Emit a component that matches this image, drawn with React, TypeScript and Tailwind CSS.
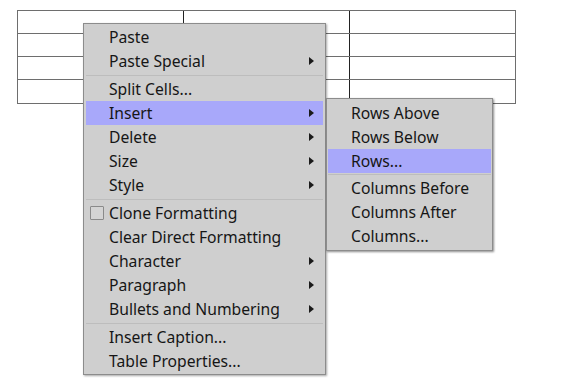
import React from "react";

type Item =
  | { kind: "sep" }
  | { kind: "item"; label: string; sub?: boolean; check?: boolean; active?: boolean };

const mainItems: Item[] = [
  { kind: "item", label: "Paste" },
  { kind: "item", label: "Paste Special", sub: true },
  { kind: "sep" },
  { kind: "item", label: "Split Cells..." },
  { kind: "item", label: "Insert", sub: true, active: true },
  { kind: "item", label: "Delete", sub: true },
  { kind: "item", label: "Size", sub: true },
  { kind: "item", label: "Style", sub: true },
  { kind: "sep" },
  { kind: "item", label: "Clone Formatting", check: true },
  { kind: "item", label: "Clear Direct Formatting" },
  { kind: "item", label: "Character", sub: true },
  { kind: "item", label: "Paragraph", sub: true },
  { kind: "item", label: "Bullets and Numbering", sub: true },
  { kind: "sep" },
  { kind: "item", label: "Insert Caption..." },
  { kind: "item", label: "Table Properties..." },
];

const insertItems: Item[] = [
  { kind: "item", label: "Rows Above" },
  { kind: "item", label: "Rows Below" },
  { kind: "item", label: "Rows...", active: true },
  { kind: "sep" },
  { kind: "item", label: "Columns Before" },
  { kind: "item", label: "Columns After" },
  { kind: "item", label: "Columns..." },
];

const Arrow = () => (
  <svg width="5" height="8" viewBox="0 0 5 8" className="absolute right-[9px] top-[8px]">
    <path d="M0 0 L5 4 L0 8 Z" fill="#1a1a1a" />
  </svg>
);

const MenuList: React.FC<{ items: Item[]; sepHeight: string }> = ({ items, sepHeight }) => (
  <>
    {items.map((it, i) =>
      it.kind === "sep" ? (
        <div key={i} className={`${sepHeight} flex items-center`}>
          <div className="w-full h-px bg-[#bdbdbd]" />
        </div>
      ) : (
        <div
          key={i}
          className={`relative h-[24px] flex items-center pl-[23px] pt-px ${it.active ? "bg-[#a8a8fa]" : ""}`}
        >
          {it.check && (
            <span className="absolute left-[4px] top-[5px] w-[14px] h-[14px] border border-[#8a8a8a] bg-[#d4d4d4] rounded-[1px]" />
          )}
          <span>{it.label}</span>
          {it.sub && <Arrow />}
        </div>
      )
    )}
  </>
);

const App: React.FC = () => {
  const rows = [0, 1, 2, 3];
  return (
    <div
      className="relative w-[576px] h-[379px] bg-white overflow-hidden text-[15.7px] text-[#161616]"
      style={{ fontFamily: '"Noto Sans", "DejaVu Sans", sans-serif' }}
    >
      {/* table in the document */}
      <div className="pt-[10px] pl-[17px]">
        <div className="w-[499px] border border-[#6e6e6e]">
          {rows.map((r) => (
            <div
              key={r}
              className={`grid grid-cols-[166px_166px_1fr] h-[23px] ${r < 3 ? "border-b border-[#6e6e6e]" : "h-[22px]"}`}
            >
              <div className="border-r border-[#222]" />
              <div className="border-r border-[#222]" />
              <div />
            </div>
          ))}
        </div>
      </div>

      {/* context menu */}
      <div className="absolute left-[83px] top-[23px] w-[243px] bg-[#cfcfcf] border border-[#8c8c8c] px-[2px] py-px shadow-[1px_1px_2px_rgba(0,0,0,0.35)]">
        <MenuList items={mainItems} sepHeight="h-[4px]" />
      </div>

      {/* Insert submenu */}
      <div className="absolute left-[326px] top-[98px] w-[167px] bg-[#cfcfcf] border border-[#8c8c8c] px-[1px] py-[2px] shadow-[1px_1px_2px_rgba(0,0,0,0.45)]">
        <MenuList items={insertItems} sepHeight="h-[3px]" />
      </div>
    </div>
  );
};

export default App;
